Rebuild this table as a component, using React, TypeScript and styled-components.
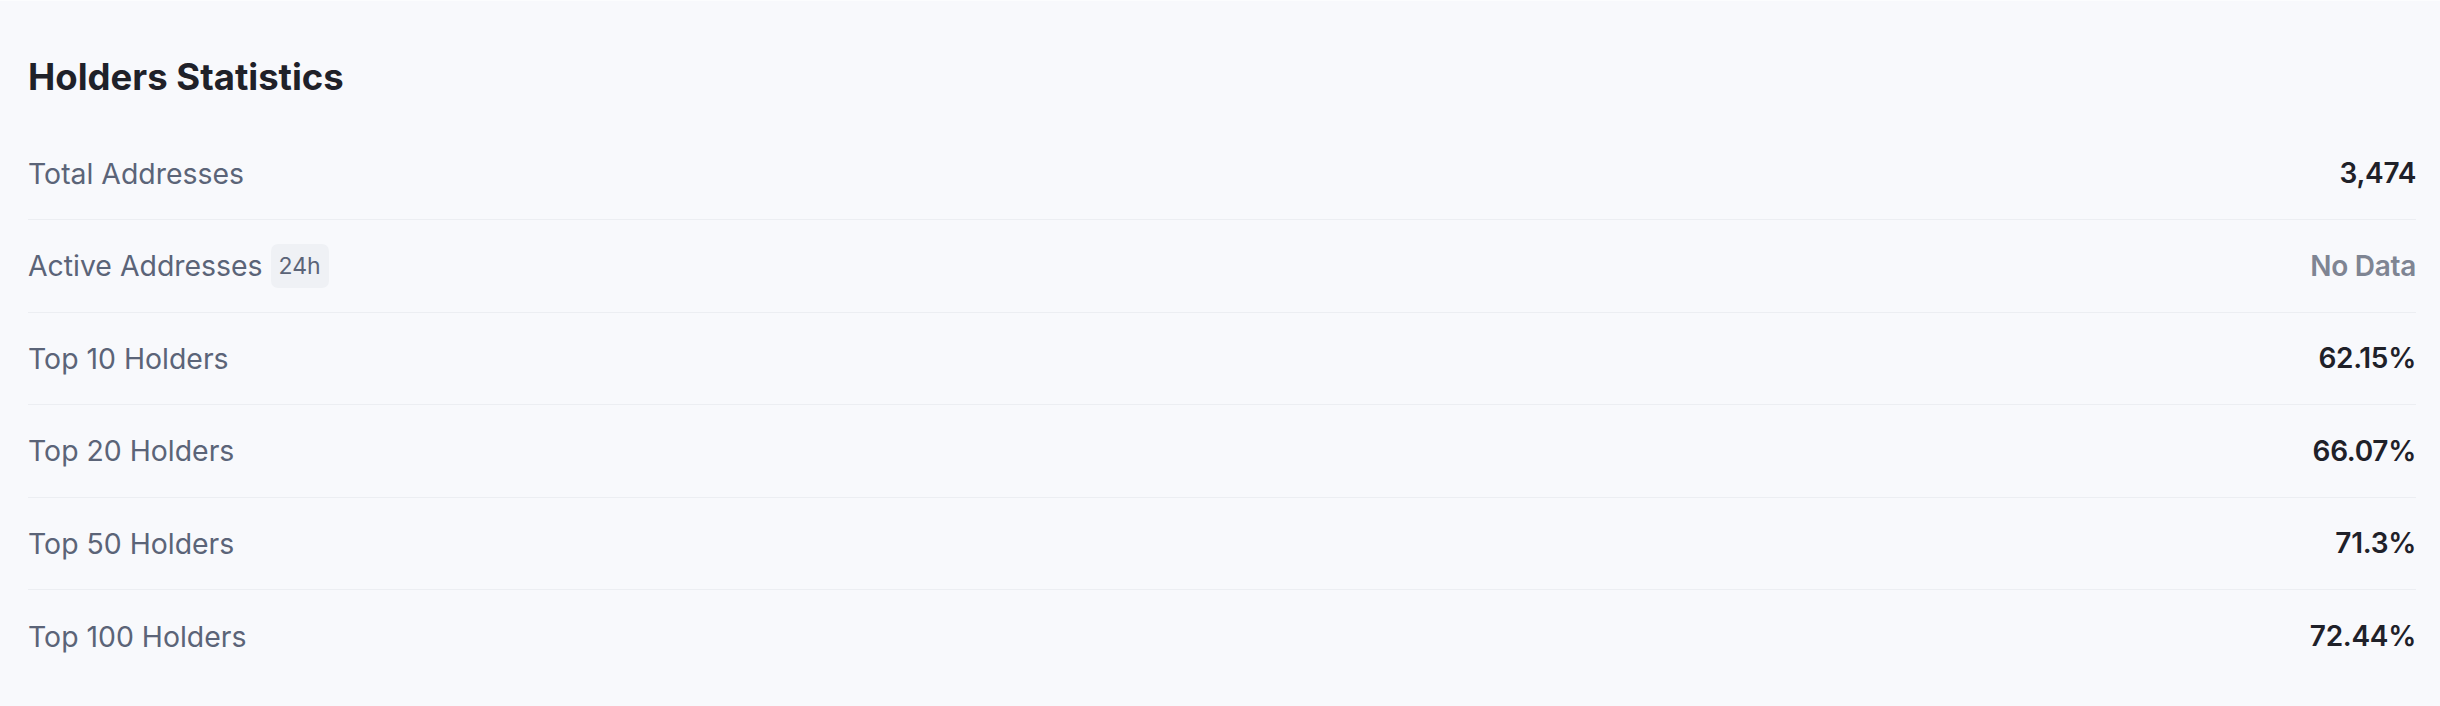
import React from "react";
import styled, { createGlobalStyle } from "styled-components";

const GlobalStyle = createGlobalStyle`
  html, body {
    margin: 0;
    padding: 0;
    background: #f8f9fc;
  }
  body {
    font-family: Inter, "Noto Sans", sans-serif;
  }
`;

const Card = styled.section`
  box-sizing: border-box;
  width: 2440px;
  background: #f8f9fc;
  border-top: 1px solid #fcfdfe;
  padding: 48px 24px 23.5px 28px;
  font-family: Inter, "Noto Sans", sans-serif;
`;

const Title = styled.h2`
  margin: 0 0 22.5px 0;
  font-size: 36.5px;
  line-height: 56px;
  font-weight: 700;
  color: #1f2129;
`;

const List = styled.div`
  display: flex;
  flex-direction: column;
`;

const Row = styled.div`
  box-sizing: border-box;
  height: 92.5px;
  display: flex;
  align-items: center;
  justify-content: space-between;
  border-bottom: 1px solid #eceef2;
  &:last-child {
    border-bottom: none;
  }
`;

const Label = styled.div`
  display: flex;
  align-items: center;
  gap: 8px;
  font-size: 28.4px;
  font-weight: 400;
  color: #5b6478;
`;

const Badge = styled.span`
  display: inline-flex;
  align-items: center;
  justify-content: center;
  height: 44px;
  padding: 0 8px;
  border-radius: 7px;
  background: #eff1f5;
  font-size: 23px;
  font-weight: 400;
  color: #5b6478;
`;

const Value = styled.div<{ $muted?: boolean }>`
  font-size: 28px;
  font-weight: 600;
  letter-spacing: -0.3px;
  color: ${(p) => (p.$muted ? "#7f8593" : "#1f2129")};
`;

const rows: { label: string; badge?: string; value: string; muted?: boolean }[] = [
  { label: "Total Addresses", value: "3,474" },
  { label: "Active Addresses", badge: "24h", value: "No Data", muted: true },
  { label: "Top 10 Holders", value: "62.15%" },
  { label: "Top 20 Holders", value: "66.07%" },
  { label: "Top 50 Holders", value: "71.3%" },
  { label: "Top 100 Holders", value: "72.44%" },
];

export default function App() {
  return (
    <>
      <GlobalStyle />
      <Card>
        <Title>Holders Statistics</Title>
        <List>
          {rows.map((r) => (
            <Row key={r.label}>
              <Label>
                {r.label}
                {r.badge && <Badge>{r.badge}</Badge>}
              </Label>
              <Value $muted={r.muted}>{r.value}</Value>
            </Row>
          ))}
        </List>
      </Card>
    </>
  );
}
